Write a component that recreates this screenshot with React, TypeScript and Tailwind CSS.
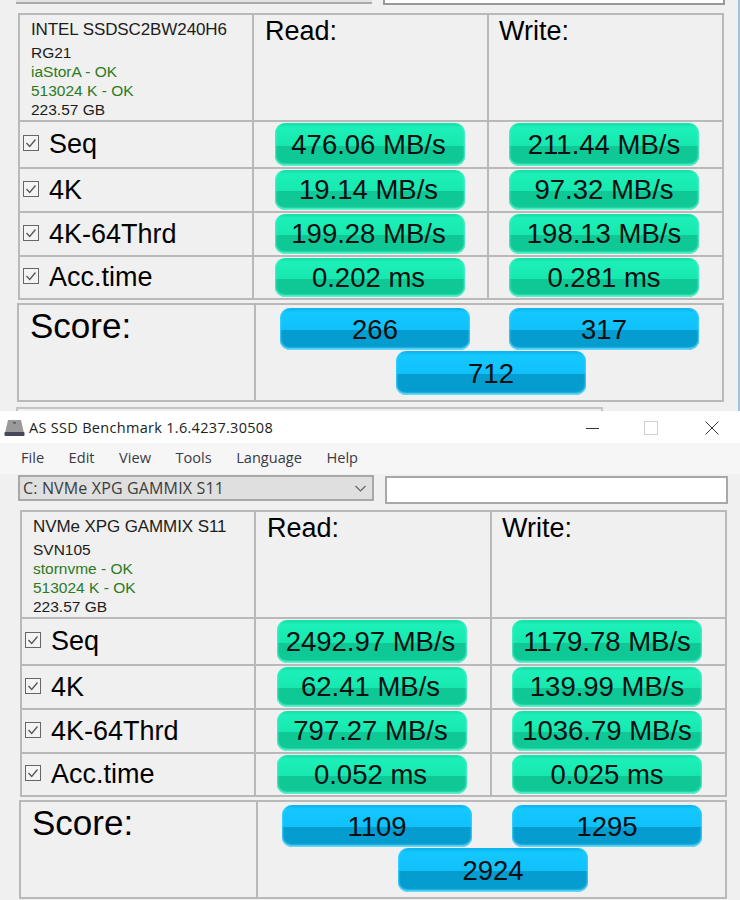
const sans = "font-['Liberation_Sans',Arial,sans-serif]";

function Bar({ label, tone, className = "" }: { label: string; tone: "green" | "blue"; className?: string }) {
  const fill =
    tone === "green"
      ? "bg-[linear-gradient(180deg,#12dca4_0%,#1cf0b8_10%,#17e8af_53%,#0fc896_53%,#0ec896_100%)] shadow-[inset_0_-3px_2px_-1px_#5ef5cf,inset_2px_0_2px_-1px_#4ff0c4,inset_-2px_0_2px_-1px_#4ff0c4]"
      : "bg-[linear-gradient(180deg,#0cb0e8_0%,#14c8ff_10%,#10c0fa_53%,#059ccf_53%,#059ccf_100%)] shadow-[inset_0_-3px_2px_-1px_#6adcff,inset_2px_0_2px_-1px_#3ccfff,inset_-2px_0_2px_-1px_#3ccfff]";
  return (
    <div
      className={`relative w-[190px] rounded-[10px] flex items-center justify-center text-[27.5px] text-[#0a0f12] ${sans} ${fill} ${className}`}
    >
      {label}
    </div>
  );
}

function CheckBox() {
  return (
    <svg className="w-4 h-4 shrink-0 -mt-[3px]" viewBox="0 0 16 16" fill="none">
      <rect x="0.5" y="0.5" width="15" height="15" fill="#f4f4f4" stroke="#666666" />
      <path d="M3.5 8 L6.7 11.5 L12.5 4.5" stroke="#555555" strokeWidth="1.3" />
    </svg>
  );
}

type Drive = {
  name: string;
  firmware: string;
  driver: string;
  rows: [string, string][];
  scores: [string, string, string];
};

const rowHeights = ["h-[45px]", "h-[42px]", "h-[42px]", "h-[41px]"];
const rowNames = ["Seq", "4K", "4K-64Thrd", "Acc.time"];

function Results({ drive, second }: { drive: Drive; second?: boolean }) {
  const cols = second ? "grid-cols-[232px_234px_233px]" : "grid-cols-[232px_233px_233px]";
  return (
    <div className={`${sans} text-black`}>
      {/* Drive info and result table */}
      <div className={`grid ${cols} gap-[2px] p-[2px] bg-[#b9b9b9] w-fit`}>
        <div className="h-[105px] bg-[#f0f0f0] pl-[11px] pt-[5px] text-[15.5px] leading-[19px] text-[#1c1c1c] overflow-hidden">
          <div className="text-[17px] leading-[20px] tracking-[-0.1px] mb-[3px]">{drive.name}</div>
          <div>{drive.firmware}</div>
          <div className="text-[#2c7a22]">{drive.driver}</div>
          <div className="text-[#2c7a22]">513024 K - OK</div>
          <div>223.57 GB</div>
        </div>
        <div className="h-[105px] bg-[#f0f0f0] pl-[11px] pt-[1px] text-[27px] leading-[30px]">Read:</div>
        <div className="h-[105px] bg-[#f0f0f0] pl-[10px] pt-[1px] text-[27px] leading-[30px]">Write:</div>
        {drive.rows.map((row, i) => (
          <div key={rowNames[i]} className="contents">
            <div className={`${rowHeights[i]} bg-[#f0f0f0] flex items-center gap-[10px] pl-[3px] text-[27px]`}>
              <CheckBox />
              <span>{rowNames[i]}</span>
            </div>
            <div className={`${rowHeights[i]} bg-[#f0f0f0] pl-[21px] flex py-px`}>
              <Bar label={row[0]} tone="green" className="pr-[3px]" />
            </div>
            <div className={`${rowHeights[i]} bg-[#f0f0f0] pl-[20px] flex py-px`}>
              <Bar label={row[1]} tone="green" />
            </div>
          </div>
        ))}
      </div>

      {/* Score box */}
      <div
        className={`mt-[3px] -ml-px flex h-[99px] border-2 border-[#b9b9b9] bg-[#f0f0f0] ${second ? "w-[708px]" : "w-[707px]"}`}
      >
        <div className="w-[237px] shrink-0 border-r-2 border-[#b9b9b9] pl-[11px] pt-[1px] text-[35px] leading-[40px]">
          Score:
        </div>
        <div className="flex-1 pl-[24px] pt-[3px]">
          <div className={`flex ${second ? "gap-[40px]" : "gap-[39px]"}`}>
            <Bar label={drive.scores[0]} tone="blue" className="h-[42px] pt-[2px]" />
            <Bar label={drive.scores[1]} tone="blue" className="h-[42px] pt-[2px]" />
          </div>
          <Bar label={drive.scores[2]} tone="blue" className="h-[44px] ml-[116px] mt-px pt-[2px]" />
        </div>
      </div>
    </div>
  );
}

const intel: Drive = {
  name: "INTEL SSDSC2BW240H6",
  firmware: "RG21",
  driver: "iaStorA - OK",
  rows: [
    ["476.06 MB/s", "211.44 MB/s"],
    ["19.14 MB/s", "97.32 MB/s"],
    ["199.28 MB/s", "198.13 MB/s"],
    ["0.202 ms", "0.281 ms"],
  ],
  scores: ["266", "317", "712"],
};

const xpg: Drive = {
  name: "NVMe XPG GAMMIX S11",
  firmware: "SVN105",
  driver: "stornvme - OK",
  rows: [
    ["2492.97 MB/s", "1179.78 MB/s"],
    ["62.41 MB/s", "139.99 MB/s"],
    ["797.27 MB/s", "1036.79 MB/s"],
    ["0.052 ms", "0.025 ms"],
  ],
  scores: ["1109", "1295", "2924"],
};

const menus = ["File", "Edit", "View", "Tools", "Language", "Help"];

export default function App() {
  return (
    <div className="w-[740px] h-[900px] overflow-hidden bg-[#f0f0f0]">
      {/* Upper window, cropped at the top */}
      <section className="relative h-[411px] overflow-hidden">
        <div className="flex h-[5px]">
          <div className="ml-[16px] w-[356px] h-[4px] border-b-2 border-[#aaaaaa] bg-[#e2e2e2]" />
          <div className="ml-[11px] w-[342px] border-2 border-t-0 border-[#999999] bg-white" />
        </div>
        <div className="ml-[18px] mt-[8px]">
          <Results drive={intel} />
        </div>
        <div className="ml-[16px] mt-[5px] w-[587px] h-[10px] border-2 border-[#c4c4c4]" />
        <div className="absolute right-0 top-0 h-full w-[2px] bg-[#9cc4e4]" />
      </section>

      {/* Title bar */}
      <header className="h-[32px] pt-[1px] bg-white flex items-center text-[14.5px] tracking-[0.3px] text-[#222222] font-['Open_Sans',sans-serif]">
        <svg className="ml-[4px] w-[21px] h-[18px] shrink-0" viewBox="0 0 21 18">
          <path d="M4 1 H17 L20 14 H1 Z" fill="#9a9a9a" />
          <rect x="0.5" y="13" width="20" height="4" rx="1" fill="#47475a" />
          <rect x="9" y="3" width="3" height="1.5" fill="#555555" />
        </svg>
        <span className="ml-[4px]">AS SSD Benchmark 1.6.4237.30508</span>
        <div className="ml-auto flex items-center text-[#333333]">
          <svg className="w-[14px] h-[14px]" viewBox="0 0 14 14">
            <path d="M0 7.5 H13" stroke="#333333" strokeWidth="1" />
          </svg>
          <svg className="ml-[44px] w-[14px] h-[14px]" viewBox="0 0 14 14" fill="none">
            <rect x="0.5" y="0.5" width="13" height="13" stroke="#d0d0d0" />
          </svg>
          <svg className="ml-[47px] mr-[21px] w-[14px] h-[14px]" viewBox="0 0 14 14">
            <path d="M0.5 0.5 L13.5 13.5 M13.5 0.5 L0.5 13.5" stroke="#333333" strokeWidth="1" />
          </svg>
        </div>
      </header>

      {/* Menu bar */}
      <nav className="h-[31px] pb-[2px] bg-[#f6f6f6] flex items-center gap-[24.5px] pl-[21px] text-[14.6px] text-[#3a3a44] font-['Open_Sans',sans-serif]">
        {menus.map((m) => (
          <span key={m}>{m}</span>
        ))}
      </nav>

      {/* Lower window */}
      <section className="bg-[#f0f0f0]">
        <div className="flex items-start">
          <div className="ml-[18px] w-[356px] h-[26px] mt-px border-2 border-[#a8a8a8] bg-[#dfdfdf] flex items-center pl-[3px] pr-[6px] text-[16px] text-[#3c3c3c] tracking-[0.15px] font-['Open_Sans',sans-serif]">
            <span>C: NVMe XPG GAMMIX S11</span>
            <svg className="ml-auto w-[11px] h-[7px]" viewBox="0 0 11 7" fill="none">
              <path d="M0.5 1 L5.5 6 L10.5 1" stroke="#666666" strokeWidth="1.2" />
            </svg>
          </div>
          <div className="ml-[11px] mt-[2px] w-[343px] h-[28px] border-2 border-[#a8a8a8] bg-white" />
        </div>
        <div className="ml-[20px] mt-[6px]">
          <Results drive={xpg} second />
        </div>
      </section>
    </div>
  );
}
